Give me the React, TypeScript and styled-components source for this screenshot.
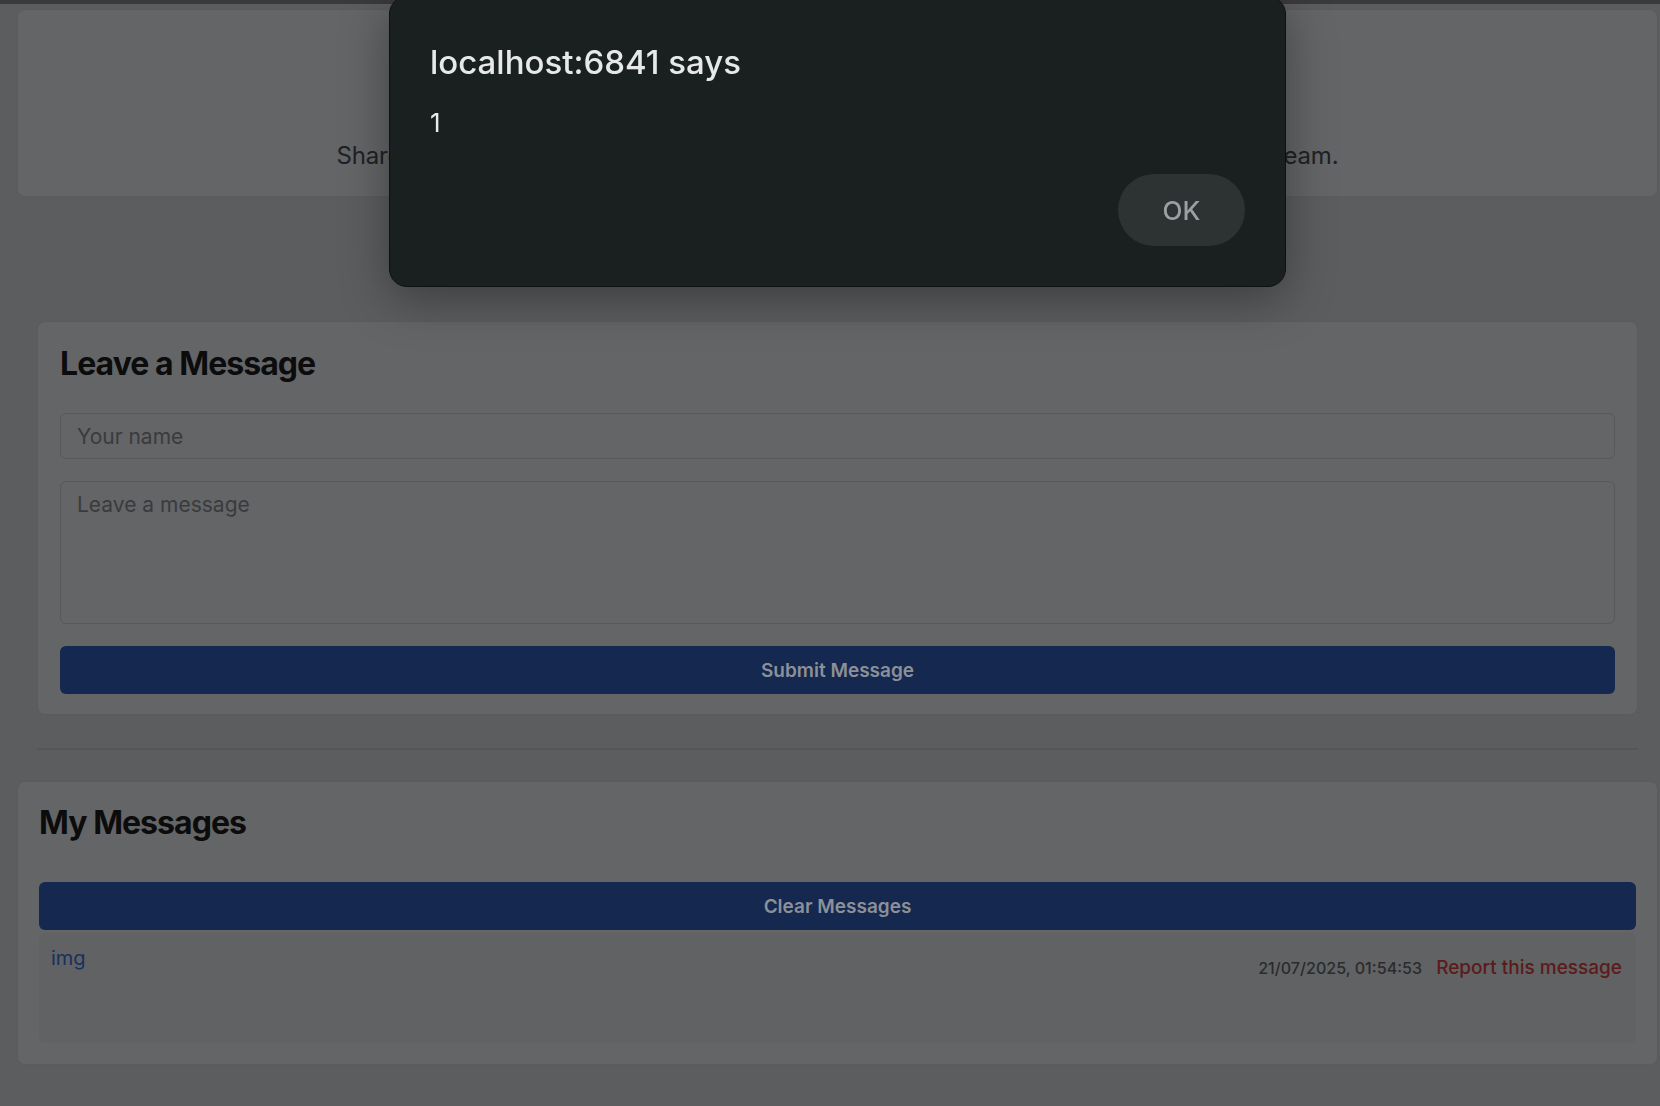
import styled, { createGlobalStyle } from "styled-components";

const GlobalStyle = createGlobalStyle`
  html, body {
    margin: 0;
    padding: 0;
    background: #5c5d5f;
    font-family: Inter, "Noto Sans", "Liberation Sans", sans-serif;
  }
  * {
    box-sizing: border-box;
  }
`;

const TopStrip = styled.div`
  height: 4px;
  background: #3a3a3a;
`;

const Page = styled.main`
  margin-left: 17px;
  width: 1641px;
  padding: 5px 0 40px;
`;

const Card = styled.section`
  background: #646567;
  border: 1px solid #5a5b5d;
  border-radius: 8px;
`;

// the title of this card sits under the alert, only the tagline ends show
const HeaderCard = styled(Card)`
  height: 188px;
  padding: 131px 20px 0;
  text-align: center;
`;

const Tagline = styled.p`
  margin: 0;
  font-size: 24px;
  letter-spacing: -0.22px;
  color: #202123;
`;

const FormCard = styled(Card)`
  margin: 124px 20px 0;
  padding: 22px 22px 20px;
`;

const SectionTitle = styled.h2`
  margin: 0;
  font-size: 32px;
  font-weight: 700;
  letter-spacing: -0.95px;
  color: #0c0c0d;
`;

const Field = styled.input`
  display: block;
  width: 100%;
  height: 46px;
  margin-top: 30px;
  padding: 0 16px;
  border: 1px solid #58595b;
  border-radius: 6px;
  background: #646567;
  font-family: inherit;
  font-size: 21px;
  color: #1a1a1a;
  outline: none;

  &::placeholder {
    color: #3a3b3d;
  }
`;

const MessageArea = styled.textarea`
  display: block;
  width: 100%;
  height: 143px;
  margin-top: 22px;
  padding: 10px 16px;
  border: 1px solid #58595b;
  border-radius: 6px;
  background: #646567;
  font-family: inherit;
  font-size: 21px;
  color: #1a1a1a;
  resize: none;
  outline: none;

  &::placeholder {
    color: #3a3b3d;
  }
`;

const PrimaryButton = styled.button<{ $gap?: number }>`
  display: block;
  width: 100%;
  height: 48px;
  margin-top: ${(p) => p.$gap ?? 0}px;
  border: none;
  border-radius: 6px;
  background: #15284f;
  color: #8c9098;
  font-family: inherit;
  font-size: 19px;
  font-weight: 600;
  cursor: pointer;
`;

const Divider = styled.hr`
  margin: 33px 20px 31px;
  border: none;
  border-top: 2px solid #555658;
`;

const MessagesCard = styled(Card)`
  padding: 21px 21px 21px;
`;

const MessageItem = styled.div`
  display: flex;
  justify-content: space-between;
  align-items: flex-start;
  min-height: 110px;
  margin-top: 3px;
  padding: 13px 14px 13px 12px;
  border-radius: 6px;
  background: #616264;
`;

const ImageLink = styled.a`
  font-size: 20px;
  color: #18305c;
  text-decoration: none;
`;

const Meta = styled.div`
  display: flex;
  align-items: baseline;
  gap: 14px;
  padding-top: 10px;
`;

const Timestamp = styled.span`
  font-size: 16.1px;
  font-weight: 500;
  color: #2a2b2d;
`;

const ReportLink = styled.button`
  padding: 0;
  border: none;
  background: none;
  font-family: inherit;
  font-size: 19px;
  font-weight: 500;
  color: #5c1a1b;
  cursor: pointer;
`;

const Dialog = styled.div`
  position: fixed;
  top: -4px;
  left: 389px;
  width: 897px;
  height: 291px;
  padding: 45px 40px 40px 40px;
  border: 1px solid #0e1111;
  border-radius: 18px;
  background: #1a1f1f;
  box-shadow: 0 12px 48px rgba(0, 0, 0, 0.35);
  display: flex;
  flex-direction: column;
`;

const DialogTitle = styled.div`
  font-size: 33px;
  font-weight: 500;
  color: #e6e8ea;
`;

const DialogText = styled.div`
  margin-top: 25px;
  font-size: 26px;
  color: #e8eaed;
`;

const DialogActions = styled.div`
  margin-top: auto;
  display: flex;
  justify-content: flex-end;
`;

const OkButton = styled.button`
  width: 127px;
  height: 72px;
  border: none;
  border-radius: 36px;
  background: #2d3333;
  color: #9aa0a4;
  font-family: inherit;
  font-size: 26px;
  font-weight: 500;
  cursor: pointer;
`;

export default function App() {
  return (
    <>
      <GlobalStyle />
      <TopStrip />
      <Page>
        <HeaderCard>
          <Tagline>
            Share your thoughts, questions, or feedback below — every message is read by our team.
          </Tagline>
        </HeaderCard>

        <FormCard>
          <SectionTitle>Leave a Message</SectionTitle>
          <Field placeholder="Your name" />
          <MessageArea placeholder="Leave a message" />
          <PrimaryButton $gap={22}>Submit Message</PrimaryButton>
        </FormCard>

        <Divider />

        <MessagesCard>
          <SectionTitle>My Messages</SectionTitle>
          <PrimaryButton $gap={40}>Clear Messages</PrimaryButton>
          <MessageItem>
            <ImageLink href="#">img</ImageLink>
            <Meta>
              <Timestamp>21/07/2025, 01:54:53</Timestamp>
              <ReportLink>Report this message</ReportLink>
            </Meta>
          </MessageItem>
        </MessagesCard>
      </Page>

      <Dialog role="alertdialog">
        <DialogTitle>localhost:6841 says</DialogTitle>
        <DialogText>1</DialogText>
        <DialogActions>
          <OkButton>OK</OkButton>
        </DialogActions>
      </Dialog>
    </>
  );
}
